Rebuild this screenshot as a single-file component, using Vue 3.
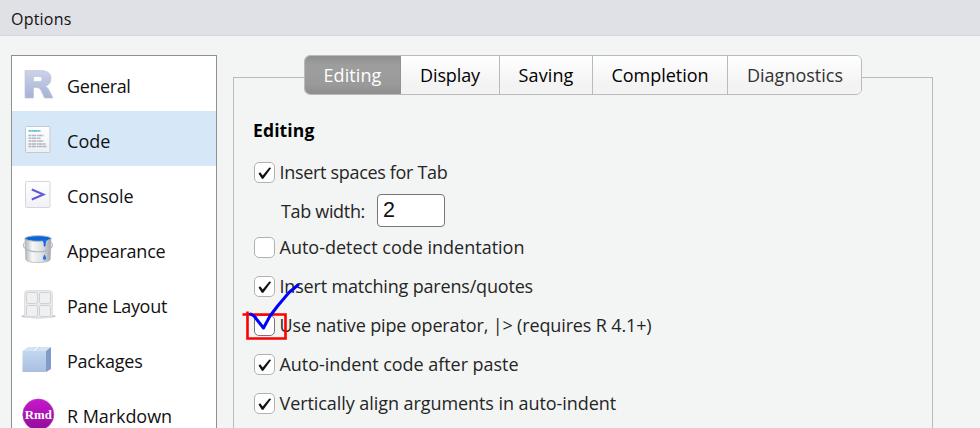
<script setup>
import { ref } from 'vue'

// Spreads letters so that a label takes the given width in pixels.
const vFit = {
  mounted(el, { value }) {
    const apply = () => {
      el.style.letterSpacing = '0px'
      const natural = el.getBoundingClientRect().width
      el.style.letterSpacing = (value - natural) / el.textContent.length + 'px'
    }
    apply()
    document.fonts?.ready.then(apply)
  },
}

const sections = [
  { name: 'General', w: 63.5 },
  { name: 'Code', w: 43.5 },
  { name: 'Console', w: 66.5 },
  { name: 'Appearance', w: 98.5 },
  { name: 'Pane Layout', w: 100 },
  { name: 'Packages', w: 75.5 },
  { name: 'R Markdown', w: 105 },
]
const tabs = [
  { name: 'Editing', w: 58, cell: 96 },
  { name: 'Display', w: 60, cell: 99 },
  { name: 'Saving', w: 55, cell: 93 },
  { name: 'Completion', w: 97, cell: 135 },
  { name: 'Diagnostics', w: 96, cell: 134 },
]
const indent = ref([
  { label: 'Auto-detect code indentation', w: 245, on: false },
  { label: 'Insert matching parens/quotes', w: 253.5, on: true },
  { label: 'Use native pipe operator, |> (requires R 4.1+)', w: 372, on: false, marked: true },
  { label: 'Auto-indent code after paste', w: 239, on: true },
  { label: 'Vertically align arguments in auto-indent', w: 336.5, on: true },
])
const spaces = ref(true)
</script>

<template>
  <div class="window">
    <header class="titlebar"><span v-fit="60.5">Options</span></header>
    <main class="content">
      <nav class="sidebar">
        <div v-for="s in sections" :key="s.name" class="section" :class="{ selected: s.name === 'Code' }">
          <svg class="icon" width="36" height="36" viewBox="0 0 36 36">
            <g v-if="s.name === 'General'">
              <defs><linearGradient id="rg" x2="0" y2="1"><stop stop-color="#ccd2e8" /><stop offset="1" stop-color="#a5b3d6" /></linearGradient></defs>
              <path fill="url(#rg)" stroke="#bfc5d3" stroke-width=".7" fill-rule="evenodd" d="M5 4.500H20C27 4.500 31 7 31 12.500C31 16.500 29 19 25.500 20.200C27.500 21.200 28.500 23 29.500 25L33 32H24.500L21.500 25.500C20.300 22.800 19 21.500 16.500 21.500H13.500V32H5ZM13.500 10.500V15.500H18.500C21 15.500 22 14.800 22 13C22 11.200 21 10.500 18.500 10.500Z" />
            </g>
            <g v-else-if="s.name === 'Code'">
              <defs><linearGradient id="cg" x2="0" y2="1"><stop stop-color="#fff" /><stop offset="1" stop-color="#edf0f4" /></linearGradient></defs>
              <rect x="5.500" y="5.500" width="24.500" height="26" rx="1" fill="url(#cg)" stroke="#c2c9d0" />
              <path d="M8.500 9.800h12" stroke="#40b5d8" stroke-width="1.800" stroke-dasharray="3 .3 2 .2" opacity=".85" />
              <path d="M8.500 14.500h15M8.500 17.300h12M8.500 20.100h15M8.500 22.900h17M8.500 25.500h9M8.500 25.500h18" stroke="#858b9b" stroke-width="1.500" stroke-dasharray="3 .5 4 .7 2 .3" opacity=".62" />
            </g>
            <g v-else-if="s.name === 'Console'">
              <defs><linearGradient id="pg" x2="0" y2="1"><stop stop-color="#fff" /><stop offset="1" stop-color="#f0f1f6" /></linearGradient></defs>
              <rect x="5.500" y="5.500" width="24.500" height="26" rx="1" fill="url(#pg)" stroke="#d5d7dc" />
              <path d="M11.800 13.500L23.500 18.500L11.800 23.500" fill="none" stroke="#6059d9" stroke-width="2" />
            </g>
            <g v-else-if="s.name === 'Appearance'">
              <defs><linearGradient id="bg"><stop stop-color="#afb4b9" /><stop offset=".28" stop-color="#f7f7f7" /><stop offset=".65" stop-color="#dfe1e3" /><stop offset="1" stop-color="#a2a6ab" /></linearGradient></defs>
              <path d="M5 7.500L5.800 28.500C6.300 32.500 29.700 32.500 30.200 28.500L31 7.500Z" fill="url(#bg)" stroke="#aaaeb2" stroke-width=".7" />
              <ellipse cx="18" cy="7.500" rx="13" ry="2.800" fill="#0965d8" stroke="#b3bac1" />
              <path d="M21 8.500h7c-2 1-2 2-2.300 5.500-.2 2-2 2-2 0 .1-3-.7-4.500-2.700-5.500Z" fill="#176be8" />
              <path d="M4.500 11.500C2.500 14 3.500 16.500 6 18C12 22 25 21.500 30 18C32.500 16 33 13.500 31.500 11.500" fill="none" stroke="#b4b7ba" stroke-width="1.100" />
              <path d="M24.300 23.500C26.700 26.500 26.700 28.500 25 28.800C22.500 28.800 22.200 27.500 24.300 23.500Z" fill="#2478ec" />
            </g>
            <g v-else-if="s.name === 'Pane Layout'">
              <ellipse cx="18.500" cy="30.300" rx="17.300" ry="2.200" fill="#c6c7ca" />
              <rect x="4.500" y="4.500" width="28" height="27" rx="3" fill="#e8e9eb" stroke="#e0e1e3" />
              <rect v-for="p in [[6.500, 6.500], [19.500, 6.500], [6.500, 19.500], [19.500, 19.500]]" :key="p.join()" :x="p[0]" :y="p[1]" width="11" height="11" rx="1.800" fill="#eff0f2" stroke="#d0d1d5" />
            </g>
            <g v-else-if="s.name === 'Packages'">
              <defs><linearGradient id="kg" x2="0" y2="1"><stop stop-color="#c2d6ee" /><stop offset="1" stop-color="#a9bfdf" /></linearGradient></defs>
              <path d="M2.500 10L8 6H31L26 10Z" fill="#d3e3f4" />
              <path d="M26 10L31 6V28L26 31Z" fill="#829cca" />
              <path d="M2.500 10H26V31H2.500Z" fill="url(#kg)" />
              <path d="M14 10L19 6" stroke="#f5f9fd" stroke-width="1.500" /><path d="M15.500 10L20 6" stroke="#a7bedb" stroke-width=".6" />
            </g>
            <g v-else>
              <defs><linearGradient id="mg" x2="0" y2="1"><stop stop-color="#c817ce" /><stop offset="1" stop-color="#8f0d9b" /></linearGradient></defs>
              <circle cx="18.300" cy="18.500" r="15.500" fill="url(#mg)" stroke="#a447ac" stroke-width=".7" />
              <text x="18.300" y="22.500" text-anchor="middle" textLength="27" lengthAdjust="spacingAndGlyphs" class="rmd">Rmd</text>
            </g>
          </svg>
          <span v-fit="s.w">{{ s.name }}</span>
        </div>
      </nav>

      <section class="pane">
        <div class="tabs">
          <div v-for="(t, i) in tabs" :key="t.name" class="tab" :class="{ active: i === 0, soft: i === 4 }" :style="{ width: t.cell + 'px' }">
            <span v-fit="t.w">{{ t.name }}</span>
          </div>
        </div>
        <h2><span v-fit="61.5">Editing</span></h2>
        <label class="option">
          <span class="box"><svg v-if="spaces" viewBox="0 0 21 20"><path d="M4.500 10.500L6.200 9.300L8.700 12.400L15.300 4.500L17.200 4.900L9.300 15.700H7.800Z" /></svg></span>
          <span v-fit="168" class="text">Insert spaces for Tab</span>
        </label>
        <div class="width-row"><span v-fit="84" class="caption">Tab width:</span><input value="2"></div>
        <label v-for="o in indent" :key="o.label" class="option">
          <span class="box" :class="{ dark: o.marked }"><svg v-if="o.on" viewBox="0 0 21 20"><path d="M4.500 10.500L6.200 9.300L8.700 12.400L15.300 4.500L17.200 4.900L9.300 15.700H7.800Z" /></svg></span>
          <span v-fit="o.w" class="text">{{ o.label }}</span>
          <svg v-if="o.marked" class="mark" width="60" height="60" viewBox="242 282 60 60">
            <path d="M242.500 314.500H285.500V338.500H247.500V311.500" fill="none" stroke="red" stroke-width="2.600" />
            <path d="M250.500 314L254 316L263.500 328L270 316L278 305.500L289 292.500L298 285" fill="none" stroke="#00f" stroke-width="3" stroke-linecap="round" stroke-linejoin="round" />
          </svg>
        </label>
      </section>
    </main>
  </div>
</template>

<style>
body { margin: 0; overflow: hidden; }
</style>
<style scoped>
* { box-sizing: border-box; }
.window { width: 980px; height: 428px; overflow: hidden; background: #f3f5f4; font-family: "Open Sans", "Noto Sans", sans-serif; font-size: 18px; color: #111; white-space: nowrap; }
.titlebar { height: 36px; padding: 3px 0 0 11px; display: flex; align-items: center; background: #e0e1e6; border-bottom: 1px solid #d5d6d8; font-size: 16px; }
.content { display: flex; height: 392px; padding: 19px 0 0 11px; }
.sidebar { width: 206px; height: 400px; flex: none; border: 1px solid #8f8f8f; background: #fff; }
.section { height: 55px; display: flex; align-items: center; gap: 11px; padding: 0 0 0 8px; }
.section > span { padding-top: 5px; }
.selected { background: #d6e8f7; }
.icon { flex: none; }
.rmd { font: bold 13px "Liberation Serif", serif; fill: #fff; }
.pane { width: 700px; height: 420px; flex: none; margin: 22px 0 0 16px; border: 1px solid #b9bbba; padding-left: 20px; }
.tabs { display: flex; width: 558px; height: 40px; margin: -23px 0 0 50px; border: 1px solid #b9bbba; border-radius: 6px; overflow: hidden; background: #f4f4f4; }
.tab { flex: none; display: flex; align-items: center; justify-content: center; padding-bottom: 1px; border-right: 1px solid #b9bbba; background: linear-gradient(#fff, #f3f3f3 75%); color: #000; }
.tab:last-child { border-right: 0; }
.active { color: #fff; border-color: #929292; background: linear-gradient(#8f8f8f, #9e9e9e 25%, #9a9a9a 75%, #8e8e8e); }
.soft { color: #333; }
h2 { margin: 16px 0 0 -1px; height: 41px; padding-bottom: 3px; display: flex; align-items: center; font-size: 17.5px; font-weight: 700; color: #000; }
.option { position: relative; display: flex; align-items: center; gap: 4.5px; height: 39px; color: #252525; }
h2 + .option { margin-top: 1px; }
.text { padding-bottom: 2px; }
.caption { padding-top: 2px; }
.box { width: 21px; height: 21px; flex: none; border: 1px solid #b1b1b1; border-radius: 5px; background: #fff; }
.box svg { display: block; width: 21px; height: 20px; margin: -.5px 0 0 -1px; fill: #111; }
.box.dark { border-color: #777; }
.width-row { display: flex; align-items: center; height: 36px; padding-left: 27px; gap: 12px; color: #252525; }
input { width: 68px; height: 33px; border: 1px solid #777; border-radius: 4px; padding: 0 5px; background: #fff; font: 21.500px "Liberation Sans", sans-serif; color: #111; }
.mark { position: absolute; left: -12px; top: -24px; pointer-events: none; }
</style>
